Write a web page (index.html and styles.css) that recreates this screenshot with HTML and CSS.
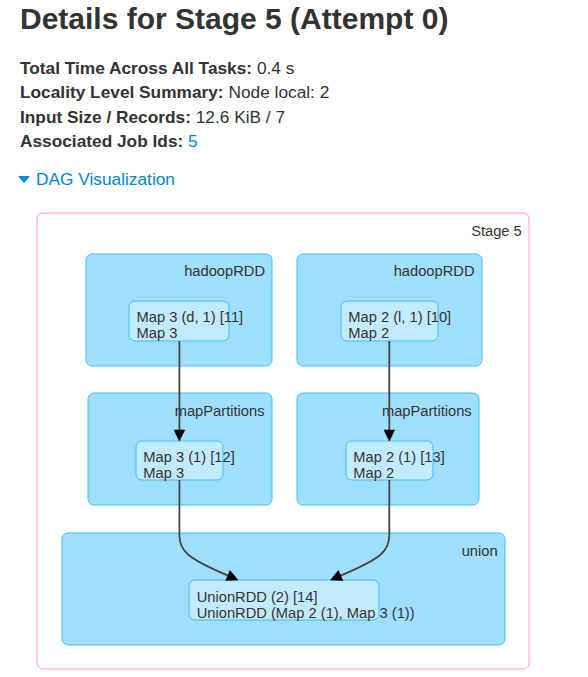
FILE: index.html
```html
<!DOCTYPE html>
<html>
<head>
<meta charset="utf-8">
<title>Details for Stage 5 (Attempt 0)</title>
<link rel="stylesheet" href="styles.css">
</head>
<body>
<div class="page">
  <h3 class="title">Details for Stage 5 (Attempt 0)</h3>
  <ul class="summary">
    <li><strong>Total Time Across All Tasks:</strong> 0.4 s</li>
    <li><strong>Locality Level Summary:</strong> Node local: 2</li>
    <li><strong>Input Size / Records:</strong> 12.6 KiB / 7</li>
    <li><strong>Associated Job Ids:</strong> <a class="link" href="#">5</a></li>
  </ul>
  <div class="dag-toggle">
    <a class="link" href="#"><span class="caret"></span>DAG Visualization</a>
  </div>
  <svg class="dag" width="548" height="477" viewBox="20 200 548 477" xmlns="http://www.w3.org/2000/svg">
    <!-- stage -->
    <rect class="stage" x="37" y="213" width="492" height="456" rx="6" ry="6"/>
    <text class="label" x="521.8" y="235.6" text-anchor="end">Stage 5</text>

    <!-- clusters -->
    <rect class="cluster" x="86" y="254" width="186" height="112" rx="6" ry="6"/>
    <text class="label" x="265" y="276" text-anchor="end">hadoopRDD</text>
    <rect class="cluster" x="297" y="254" width="185" height="112" rx="6" ry="6"/>
    <text class="label" x="474.5" y="276" text-anchor="end">hadoopRDD</text>

    <rect class="cluster" x="88" y="393" width="184" height="112" rx="6" ry="6"/>
    <text class="label" x="264.5" y="415.6" text-anchor="end">mapPartitions</text>
    <rect class="cluster" x="297" y="393" width="182" height="112" rx="6" ry="6"/>
    <text class="label" x="471.7" y="415.6" text-anchor="end">mapPartitions</text>

    <rect class="cluster" x="62" y="533" width="443" height="112" rx="6" ry="6"/>
    <text class="label" x="497.6" y="555.6" text-anchor="end">union</text>

    <!-- nodes -->
    <rect class="node" x="129" y="301" width="100" height="40" rx="6" ry="6"/>
    <text class="label"><tspan x="136.5" y="322">Map 3 (d, 1) [11]</tspan><tspan x="136.5" y="338">Map 3</tspan></text>

    <rect class="node" x="341" y="301" width="97" height="40" rx="6" ry="6"/>
    <text class="label"><tspan x="348.3" y="322">Map 2 (l, 1) [10]</tspan><tspan x="348.3" y="338">Map 2</tspan></text>

    <rect class="node" x="136" y="441" width="87" height="39" rx="6" ry="6"/>
    <text class="label"><tspan x="143.3" y="462">Map 3 (1) [12]</tspan><tspan x="143.3" y="478">Map 3</tspan></text>

    <rect class="node" x="346" y="441" width="87" height="39" rx="6" ry="6"/>
    <text class="label"><tspan x="353.3" y="462">Map 2 (1) [13]</tspan><tspan x="353.3" y="478">Map 2</tspan></text>

    <rect class="node" x="189" y="580" width="190" height="40" rx="6" ry="6"/>
    <text class="label"><tspan x="196.7" y="601.6">UnionRDD (2) [14]</tspan><tspan x="196.7" y="617.6">UnionRDD (Map 2 (1), Map 3 (1))</tspan></text>

    <!-- edges -->
    <path class="edge" d="M179.4,341 L179.4,431"/>
    <polygon class="arrow" points="174.1,430 184.7,430 179.4,441"/>
    <path class="edge" d="M389.3,341 L389.3,431"/>
    <polygon class="arrow" points="384,430 394.6,430 389.3,441"/>

    <path class="edge" d="M179.4,480 L179.4,535 C179.4,551 187,558 228,575.6"/>
    <polygon class="arrow" points="238,580 225.7,580.5 230.1,570.6"/>
    <path class="edge" d="M389.3,480 L389.3,535 C389.3,551 382,558 340.6,575.6"/>
    <polygon class="arrow" points="330.5,580 342.8,580.5 338.4,570.6"/>
  </svg>
</div>
</body>
</html>
```
FILE: styles.css
```css
html, body {
  margin: 0;
  padding: 0;
  background: #ffffff;
}

body {
  font-family: "Liberation Sans", Arial, Helvetica, sans-serif;
  color: #333333;
}

.page {
  padding: 1px 20px 0 20px;
}

.title {
  margin: 0;
  font-size: 30px;
  line-height: 36px;
  font-weight: 700;
  color: #333333;
}

.summary {
  list-style: none;
  margin: 19px 0 0 0;
  padding: 0;
  font-size: 17.3px;
  line-height: 24.4px;
}

.summary strong {
  font-weight: 700;
}

.link {
  color: #0088cc;
  text-decoration: none;
}

.dag-toggle {
  margin-top: 13px;
  font-size: 17.3px;
  line-height: 24.4px;
}

.caret {
  display: inline-block;
  width: 0;
  height: 0;
  border-left: 6px solid transparent;
  border-right: 6px solid transparent;
  border-top: 7px solid #0088cc;
  margin: 0 6px 2px -2px;
}

.dag {
  display: block;
  margin-top: 9px;
}

.dag .stage {
  fill: #ffffff;
  stroke: #ff99ac;
  stroke-width: 1px;
}

.dag .cluster {
  fill: #a0dfff;
  stroke: #3ec0ff;
  stroke-width: 1px;
}

.dag .node {
  fill: #c3ebff;
  stroke: #3ec0ff;
  stroke-width: 1px;
}

.dag .label {
  font-family: "Liberation Sans", Arial, Helvetica, sans-serif;
  font-size: 14.7px;
  fill: #333333;
}

.dag .edge {
  fill: none;
  stroke: #444444;
  stroke-width: 1.8px;
}

.dag .arrow {
  fill: #000000;
  stroke: #000000;
  stroke-width: 0.6px;
}
```
